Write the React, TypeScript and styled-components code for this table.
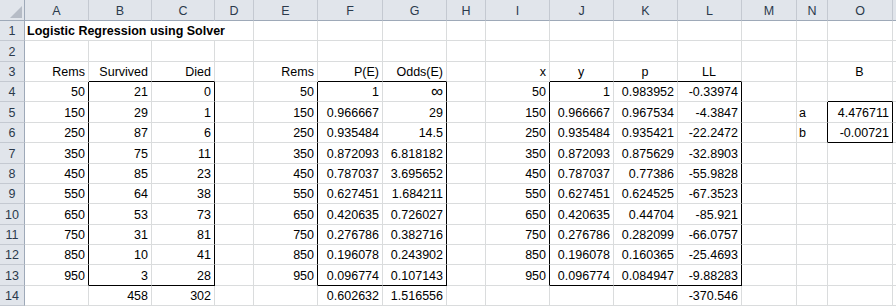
import React from "react"
import styled, { createGlobalStyle } from "styled-components"

const GlobalStyle = createGlobalStyle`
    html, body {
        margin: 0;
        padding: 0;
        background: #ffffff;
        overflow: hidden;
    }
`

const COLS = ["A", "B", "C", "D", "E", "F", "G", "H", "I", "J", "K", "L", "M", "N", "O", "P"]
const WIDTHS = [64, 63, 63, 39, 64, 65, 64, 39, 64, 64, 64, 64, 55, 31, 65, 40]
const ROWS = 14

const GRID = "#dadcdd"
const HEAD_BG = "#e1e5eb"
const HEAD_LINE = "#c4c9d1"
const HEAD_EDGE = "#9ea9b8"

type Align = "left" | "right" | "center"
type Entry = { v: string, align: Align, bold?: boolean, span?: number }

// which blocks have the thin black outline: [firstCol, lastCol, firstRow, lastRow]
const BOXES: [number, number, number, number][] = [
    [1, 2, 4, 13],
    [5, 6, 4, 13],
    [9, 11, 4, 13],
    [14, 14, 5, 6],
]

const data: Record<string, Entry> = {}
const put = (col: string, row: number, v: string | number, align: Align = "right", bold = false, span?: number) => {
    data[col + row] = { v: String(v), align, bold, span }
}

const rems = [50, 150, 250, 350, 450, 550, 650, 750, 850, 950]
const survived = [21, 29, 87, 75, 85, 64, 53, 31, 10, 3]
const died = [0, 1, 6, 11, 23, 38, 73, 81, 41, 28]
const pe = ["1", "0.966667", "0.935484", "0.872093", "0.787037", "0.627451", "0.420635", "0.276786", "0.196078", "0.096774"]
const odds = ["∞", "29", "14.5", "6.818182", "3.695652", "1.684211", "0.726027", "0.382716", "0.243902", "0.107143"]
const pHat = ["0.983952", "0.967534", "0.935421", "0.875629", "0.77386", "0.624525", "0.44704", "0.282099", "0.160365", "0.084947"]
const ll = ["-0.33974", "-4.3847", "-22.2472", "-32.8903", "-55.9828", "-67.3523", "-85.921", "-66.0757", "-25.4693", "-9.88283"]

put("A", 1, "Logistic Regression using Solver", "left", true, 4)
put("A", 3, "Rems")
put("B", 3, "Survived")
put("C", 3, "Died")
put("E", 3, "Rems")
put("F", 3, "P(E)")
put("G", 3, "Odds(E)")
put("I", 3, "x")
put("J", 3, "y", "center")
put("K", 3, "p", "center")
put("L", 3, "LL", "center")
put("O", 3, "B", "center")

rems.forEach((r, i) => {
    const row = i + 4
    put("A", row, r)
    put("B", row, survived[i])
    put("C", row, died[i])
    put("E", row, r)
    put("F", row, pe[i])
    put("G", row, odds[i])
    put("I", row, r)
    put("J", row, pe[i])
    put("K", row, pHat[i])
    put("L", row, ll[i])
})

put("N", 5, "a", "left")
put("N", 6, "b", "left")
put("O", 5, "4.476711")
put("O", 6, "-0.00721")

put("B", 14, 458)
put("C", 14, 302)
put("F", 14, "0.602632")
put("G", 14, "1.516556")
put("L", 14, "-370.546")

const inBox = (c: number, r: number) =>
    BOXES.some(([c1, c2, r1, r2]) => c >= c1 && c <= c2 && r >= r1 && r <= r2)

// a cell's right edge is black when it, or the cell right of it, is on a box's side
const rightEdge = (c: number, r: number) => inBox(c, r) !== inBox(c + 1, r)
const bottomEdge = (c: number, r: number) => inBox(c, r) !== inBox(c, r + 1)

const Sheet = styled.div`
    display: grid;
    grid-template-columns: 25px ${WIDTHS.map((w) => w + "px").join(" ")};
    grid-template-rows: 21px repeat(${ROWS}, 20.36px);
    width: 896px;
    height: 307px;
    overflow: hidden;
    font-family: "Liberation Sans", Arial, sans-serif;
    font-size: 12.5px;
    color: #000000;
`

const Corner = styled.div`
    position: relative;
    background: ${HEAD_BG};
    border-right: 1px solid ${HEAD_EDGE};
    border-bottom: 1px solid ${HEAD_EDGE};
    box-sizing: border-box;
`

const CornerMark = styled.svg`
    position: absolute;
    right: 2px;
    bottom: 2px;
`

const ColHead = styled.div`
    display: flex;
    align-items: flex-end;
    justify-content: center;
    padding-bottom: 2px;
    box-sizing: border-box;
    background: ${HEAD_BG};
    border-right: 1px solid ${HEAD_LINE};
    border-bottom: 1px solid ${HEAD_EDGE};
    color: #2b3a4c;
    font-size: 12.5px;
`

const RowHead = styled.div`
    display: flex;
    align-items: flex-end;
    justify-content: center;
    padding-bottom: 2px;
    box-sizing: border-box;
    background: ${HEAD_BG};
    border-right: 1px solid ${HEAD_EDGE};
    border-bottom: 1px solid ${HEAD_LINE};
    color: #2b3a4c;
    font-size: 12.5px;
`

const Cell = styled.div<{ $align: Align, $bold?: boolean, $right: boolean, $bottom: boolean, $span: number }>`
    grid-column: span ${(p) => p.$span};
    display: flex;
    align-items: flex-end;
    justify-content: ${(p) => p.$align === "left" ? "flex-start" : p.$align === "center" ? "center" : "flex-end"};
    padding: 0 3px 2px 2px;
    box-sizing: border-box;
    white-space: nowrap;
    overflow: visible;
    font-weight: ${(p) => p.$bold ? 700 : 400};
    border-right: 1px solid ${(p) => p.$right ? "#000000" : GRID};
    border-bottom: 1px solid ${(p) => p.$bottom ? "#000000" : GRID};
`

const Infinity = styled.span`
    font-size: 17px;
    line-height: 14px;
`

export default function App() {
    const rows = []
    for (let r = 1; r <= ROWS; r++) {
        rows.push(<RowHead key={"h" + r}>{r}</RowHead>)
        let c = 0
        while (c < COLS.length) {
            const entry = data[COLS[c] + r]
            const span = entry?.span ?? 1
            const last = c + span - 1
            rows.push(
                <Cell
                    key={COLS[c] + r}
                    $align={entry?.align ?? "right"}
                    $bold={entry?.bold}
                    $span={span}
                    $right={rightEdge(last, r)}
                    $bottom={bottomEdge(c, r)}
                >
                    {entry?.v === "∞" ? <Infinity>∞</Infinity> : entry?.v}
                </Cell>
            )
            c += span
        }
    }

    return (
        <>
            <GlobalStyle />
            <Sheet>
                <Corner>
                    <CornerMark width="12" height="12" viewBox="0 0 12 12">
                        <polygon points="12,0 12,12 0,12" fill="#b6bcc6" />
                    </CornerMark>
                </Corner>
                {COLS.map((col, i) => (
                    <ColHead key={col}>{i < 15 ? col : ""}</ColHead>
                ))}
                {rows}
            </Sheet>
        </>
    )
}
